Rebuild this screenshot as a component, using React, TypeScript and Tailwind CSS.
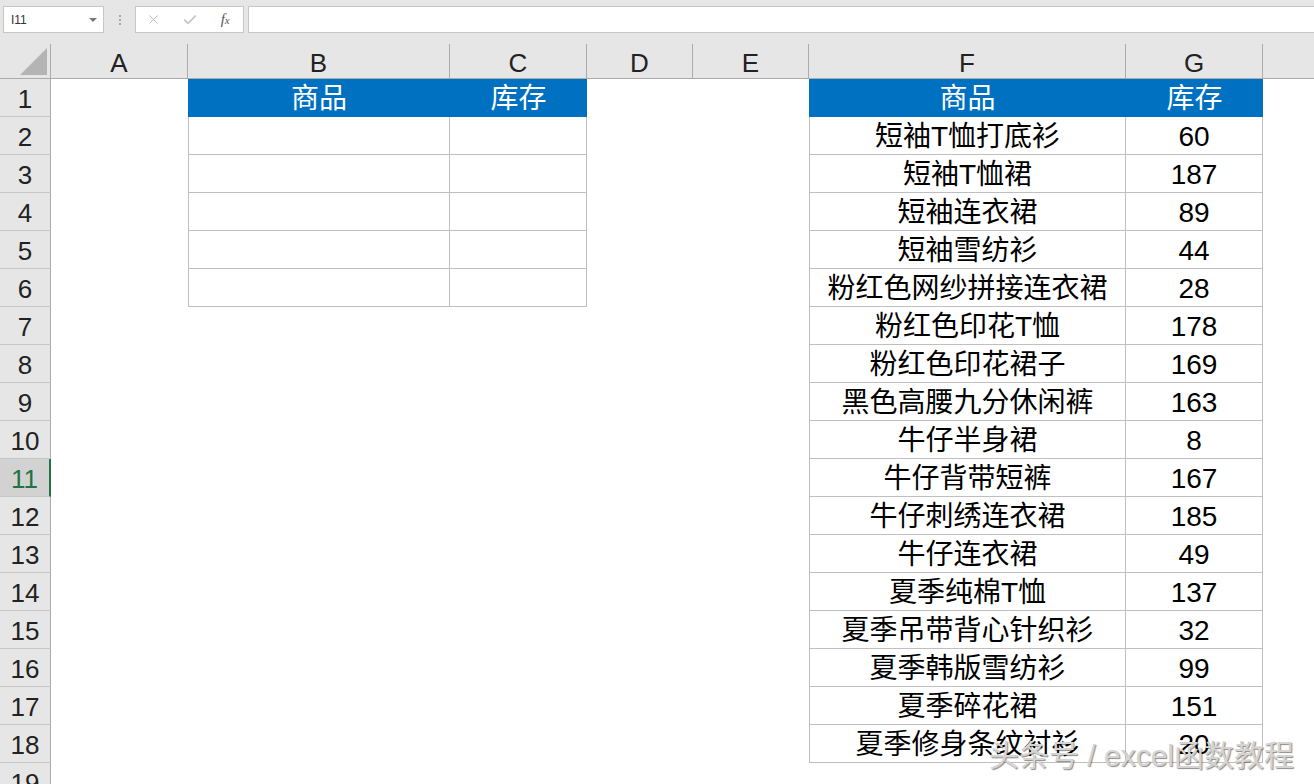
import { Check, X } from "lucide-react";

const letters = ["A", "B", "C", "D", "E", "F", "G", ""];

const stock: [string, string][] = [
  ["短袖T恤打底衫", "60"],
  ["短袖T恤裙", "187"],
  ["短袖连衣裙", "89"],
  ["短袖雪纺衫", "44"],
  ["粉红色网纱拼接连衣裙", "28"],
  ["粉红色印花T恤", "178"],
  ["粉红色印花裙子", "169"],
  ["黑色高腰九分休闲裤", "163"],
  ["牛仔半身裙", "8"],
  ["牛仔背带短裤", "167"],
  ["牛仔刺绣连衣裙", "185"],
  ["牛仔连衣裙", "49"],
  ["夏季纯棉T恤", "137"],
  ["夏季吊带背心针织衫", "32"],
  ["夏季韩版雪纺衫", "99"],
  ["夏季碎花裙", "151"],
  ["夏季修身条纹衬衫", "20"],
];

const gridCols =
  "grid grid-cols-[51px_137px_262px_137px_106px_116px_317px_137px_1fr]";

const TopBar = () => (
  <div className="h-[44px] bg-[#e6e6e6] flex items-start pt-[6px] pl-[3px]">
    {/* Name box */}
    <div className="w-[101px] h-[27px] bg-white border border-[#c6c6c6] flex items-center justify-between pl-[7px] pr-[6px]">
      <span className="text-[12px] text-[#333] font-['Liberation_Sans',sans-serif]">I11</span>
      <span className="w-0 h-0 border-l-[4px] border-r-[4px] border-t-[4px] border-l-transparent border-r-transparent border-t-[#777]" />
    </div>
    {/* Dots */}
    <div className="w-[31px] h-[27px] flex flex-col items-center justify-center gap-[2px]">
      <span className="w-[2px] h-[2px] bg-[#a8a8a8]" />
      <span className="w-[2px] h-[2px] bg-[#a8a8a8]" />
      <span className="w-[2px] h-[2px] bg-[#a8a8a8]" />
    </div>
    {/* Formula buttons */}
    <div className="w-[109px] h-[27px] bg-white border border-[#c6c6c6] flex items-center">
      <div className="w-[36px] flex justify-center">
        <X size={15} strokeWidth={1.5} className="text-[#bdbdbd]" />
      </div>
      <div className="w-[36px] flex justify-center">
        <Check size={16} strokeWidth={2.5} className="text-[#c4c4c4]" />
      </div>
      <div className="w-[36px] flex justify-center">
        <span className="font-['Liberation_Serif',serif] italic text-[15px] text-[#555] leading-none">
          f<span className="text-[11px]">x</span>
        </span>
      </div>
    </div>
    {/* Formula input */}
    <div className="ml-[4px] flex-1 h-[27px] bg-white border border-[#c6c6c6] border-r-0" />
  </div>
);

const ColumnHeader = () => (
  <div className={`${gridCols} grid-rows-[34px] h-[35px] bg-[#e6e6e6] border-b border-[#ababab] leading-none`}>
    <div className="border-r border-[#ababab] flex items-end justify-end pr-[3px] pb-[3px]">
      <span className="w-[27px] h-[27px] bg-[#b4b4b4] [clip-path:polygon(100%_0,100%_100%,0_100%)]" />
    </div>
    {letters.map((l, i) => (
      <div
        key={i}
        className={`flex items-center justify-center pt-[3px] text-[26px] text-[#222] ${
          i < letters.length - 1 ? "border-r border-[#ababab]" : ""
        }`}
      >
        {l}
      </div>
    ))}
  </div>
);

const Row = ({ n }: { n: number }) => {
  const active = n === 11;
  const bodyCell = "border-b border-r border-[#bfbfbf] flex items-center justify-center pt-[2px]";
  const head = "bg-[#0070c0] text-white flex items-center justify-center pt-[2px]";

  const left = n >= 2 && n <= 6;
  const item = n >= 2 ? stock[n - 2] : null;

  return (
    <div className={`${gridCols} grid-rows-[38px] h-[38px] leading-none`}>
      {/* Row number */}
      <div
        className={`flex items-center justify-center pt-[2px] text-[26px] border-b border-[#c6c6c6] ${
          active
            ? "bg-[#d2d2d2] text-[#217346] border-r-2 border-r-[#217346]"
            : "bg-[#e6e6e6] text-[#222] border-r border-r-[#ababab]"
        }`}
      >
        {n}
      </div>
      <div />
      {/* B / C table */}
      {n === 1 ? (
        <>
          <div className={head}>商品</div>
          <div className={head}>库存</div>
        </>
      ) : left ? (
        <>
          <div className={`${bodyCell} border-l`} />
          <div className={bodyCell} />
        </>
      ) : (
        <>
          <div />
          <div />
        </>
      )}
      <div />
      <div />
      {/* F / G table */}
      {n === 1 ? (
        <>
          <div className={head}>商品</div>
          <div className={head}>库存</div>
        </>
      ) : item ? (
        <>
          <div className={`${bodyCell} border-l`}>{item[0]}</div>
          <div className={bodyCell}>{item[1]}</div>
        </>
      ) : (
        <>
          <div />
          <div />
        </>
      )}
      <div />
    </div>
  );
};

export default function App() {
  return (
    <div className="relative w-[1314px] h-[784px] overflow-hidden bg-white font-['Liberation_Sans','Noto_Sans_CJK_SC',sans-serif] text-[28px] text-black">
      <TopBar />
      <ColumnHeader />
      {Array.from({ length: 19 }, (_, i) => (
        <Row key={i} n={i + 1} />
      ))}

      {/* Watermark */}
      <div className="absolute left-[989px] top-[741px] text-[30px] leading-none whitespace-nowrap text-[#d4d4d4] [text-shadow:1px_1px_1px_rgba(0,0,0,0.45)]">
        头条号 / excel函数教程
      </div>
    </div>
  );
}
